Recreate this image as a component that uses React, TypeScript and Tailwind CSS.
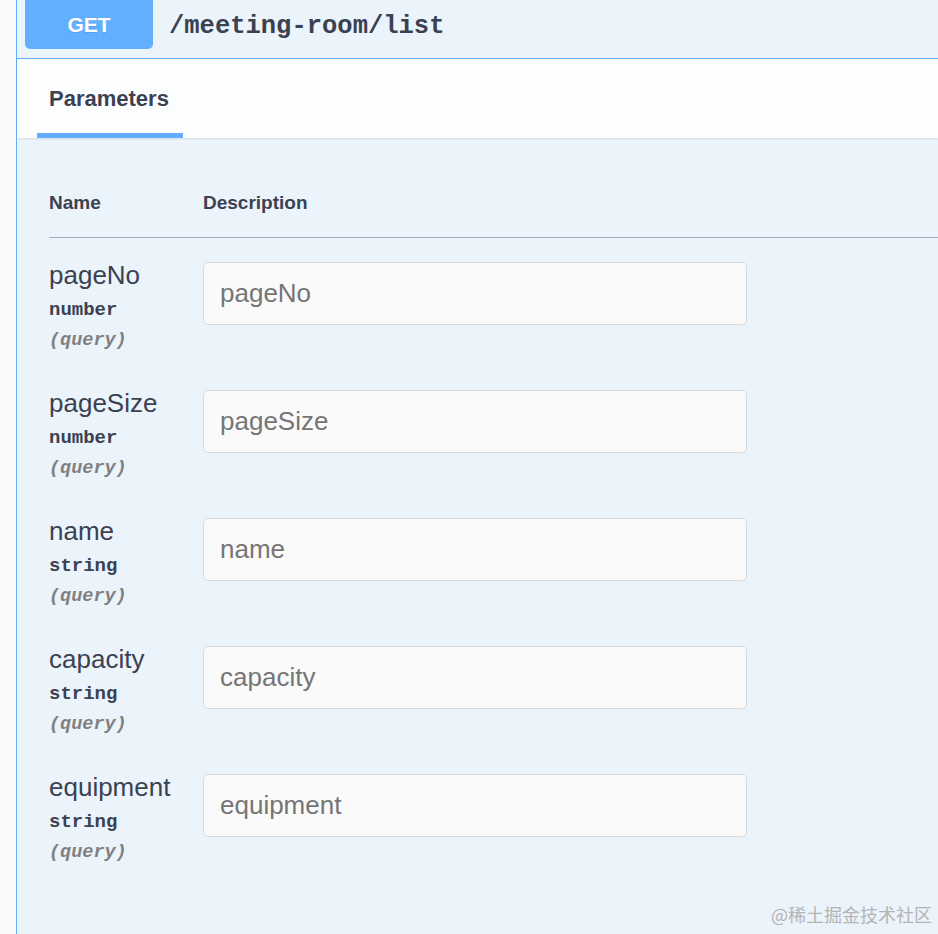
const params = [
  { name: "pageNo", type: "number" },
  { name: "pageSize", type: "number" },
  { name: "name", type: "string" },
  { name: "capacity", type: "string" },
  { name: "equipment", type: "string" },
];

const sans = "font-['Liberation_Sans',Helvetica,Arial,sans-serif]";
const mono = "font-['Liberation_Mono','Courier_New',monospace]";

export default function App() {
  return (
    <div className={`flex h-[934px] w-[938px] overflow-hidden bg-[#fafafa] text-[#3b4151] ${sans}`}>
      <div className="w-[16px] shrink-0" />
      <div className="relative flex flex-1 flex-col border-l border-[#61affe] bg-[#ebf3fb]">
        {/* Summary */}
        <div className="flex h-[59px] items-start border-b border-[#61affe] pl-[8px]">
          <div className="flex h-[49px] w-[128px] items-center justify-center rounded-b-[5px] bg-[#61affe] text-[21px] font-bold text-white [text-shadow:0_1px_0_rgba(0,0,0,0.1)]">
            GET
          </div>
          <div className={`ml-[16px] flex h-[54px] items-center text-[25.5px] font-bold text-[#3b4151] ${mono}`}>
            /meeting-room/list
          </div>
        </div>

        {/* Tabs */}
        <div className="flex h-[79px] bg-[#fcfdff] pl-[20px] shadow-[0_1px_2px_rgba(0,0,0,0.1)]">
          <div className="relative flex h-full items-center px-[12px] text-[22px] font-semibold">
            <span className="pr-[2px]">Parameters</span>
            <div className="absolute bottom-0 left-0 right-0 h-[5px] bg-[#61affe]" />
          </div>
        </div>

        {/* Table header */}
        <div className="ml-[32px] flex pt-[51px] pb-[20px] text-[19px] font-semibold leading-[28px]">
          <div className="w-[154px]">Name</div>
          <div>Description</div>
        </div>
        <div className="ml-[32px] h-px bg-[#a5aebd]" />

        {/* Rows */}
        <div className="ml-[32px] flex flex-col pt-[21px]">
          {params.map((p) => (
            <div key={p.name} className="flex h-[128px] items-start">
              <div className="w-[154px]">
                <div className="text-[26px] leading-[32px]">{p.name}</div>
                <div className={`mt-[4px] text-[19px] font-bold leading-[30px] ${mono}`}>{p.type}</div>
                <div className={`mt-[1px] text-[18.5px] font-bold italic leading-[30px] text-[#808080] ${mono}`}>
                  (query)
                </div>
              </div>
              <input
                placeholder={p.name}
                className="mt-[3px] h-[63px] w-[544px] rounded-[5px] border border-[#d9d9d9] bg-[#fafafa] px-[16px] text-[26px] text-[#3b4151] outline-none placeholder:text-[#757575]"
              />
            </div>
          ))}
        </div>

        <div className="absolute bottom-[6px] right-[6px] font-['Noto_Sans_CJK_SC',sans-serif] text-[18px] text-[#b4b4b4]">
          @稀土掘金技术社区
        </div>
      </div>
    </div>
  );
}
